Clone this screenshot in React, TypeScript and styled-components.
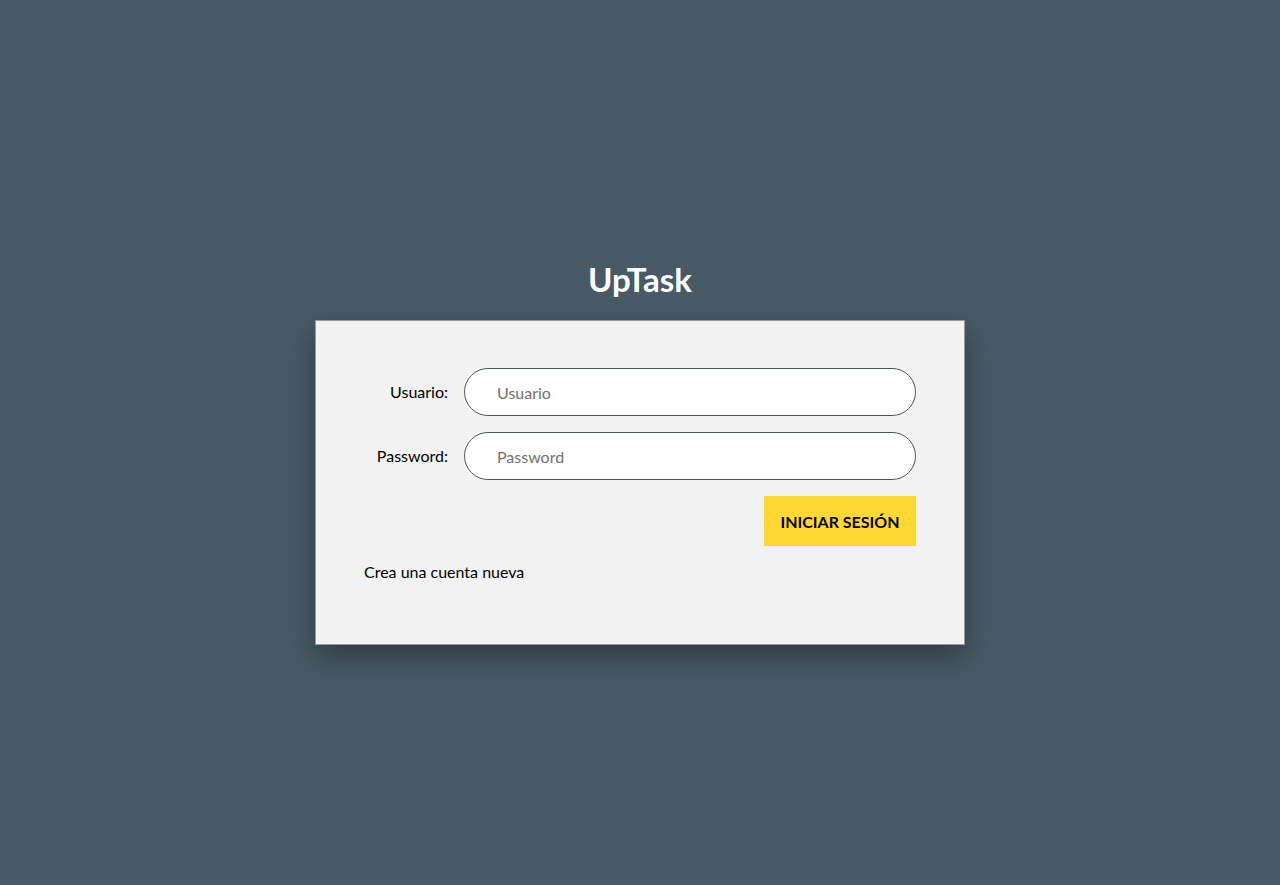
import React from "react";
import styled, { createGlobalStyle } from "styled-components";

const Global = createGlobalStyle`
  html, body { margin: 0; padding: 0; }
  body {
    background: #475a66;
    font-family: Lato, "Open Sans", sans-serif;
    color: #000;
  }
  * { box-sizing: border-box; }
`;

const Page = styled.main`
  min-height: 885px;
  display: flex;
  flex-direction: column;
  align-items: center;
  padding-top: 260px;
`;

const Title = styled.h1`
  margin: 0 0 21px;
  font-size: 33px;
  line-height: 39px;
  font-weight: 700;
  color: #fff;
`;

const Card = styled.form`
  width: 650px;
  height: 325px;
  background: #f2f2f2;
  border: 1px solid #9a9a9a;
  box-shadow: 0 12px 28px rgba(0, 0, 0, 0.35);
  padding: 47px 48px;
  display: flex;
  flex-direction: column;
  gap: 16px;
`;

const Row = styled.div`
  display: grid;
  grid-template-columns: 84px 1fr;
  column-gap: 16px;
  align-items: center;
`;

const Label = styled.label`
  font-size: 16px;
  line-height: 18px;
  text-align: right;
  color: #000;
`;

const Input = styled.input`
  height: 48px;
  width: 100%;
  border: 1px solid #475a66;
  border-radius: 24px;
  background: #fff;
  padding: 0 32px;
  font-family: Lato, sans-serif;
  font-size: 16px;
  outline: none;
  &::placeholder { color: #75706d; }
`;

const Actions = styled.div`
  display: flex;
  justify-content: flex-end;
`;

const Button = styled.button`
  height: 50px;
  width: 152px;
  border: none;
  background: #ffd932;
  font-family: Lato, sans-serif;
  font-weight: 700;
  font-size: 16px;
  text-transform: uppercase;
  color: #000;
  cursor: pointer;
`;

const Link = styled.a`
  font-size: 16px;
  line-height: 20px;
  color: #000;
  text-decoration: none;
`;

export default function App() {
  return (
    <>
      <Global />
      <Page>
        <Title>UpTask</Title>
        <Card onSubmit={(e) => e.preventDefault()}>
          <Row>
            <Label htmlFor="usuario">Usuario:</Label>
            <Input id="usuario" type="text" placeholder="Usuario" />
          </Row>
          <Row>
            <Label htmlFor="password">Password:</Label>
            <Input id="password" type="password" placeholder="Password" />
          </Row>
          <Actions>
            <Button type="submit">Iniciar Sesión</Button>
          </Actions>
          <Link href="#">Crea una cuenta nueva</Link>
        </Card>
      </Page>
    </>
  );
}
